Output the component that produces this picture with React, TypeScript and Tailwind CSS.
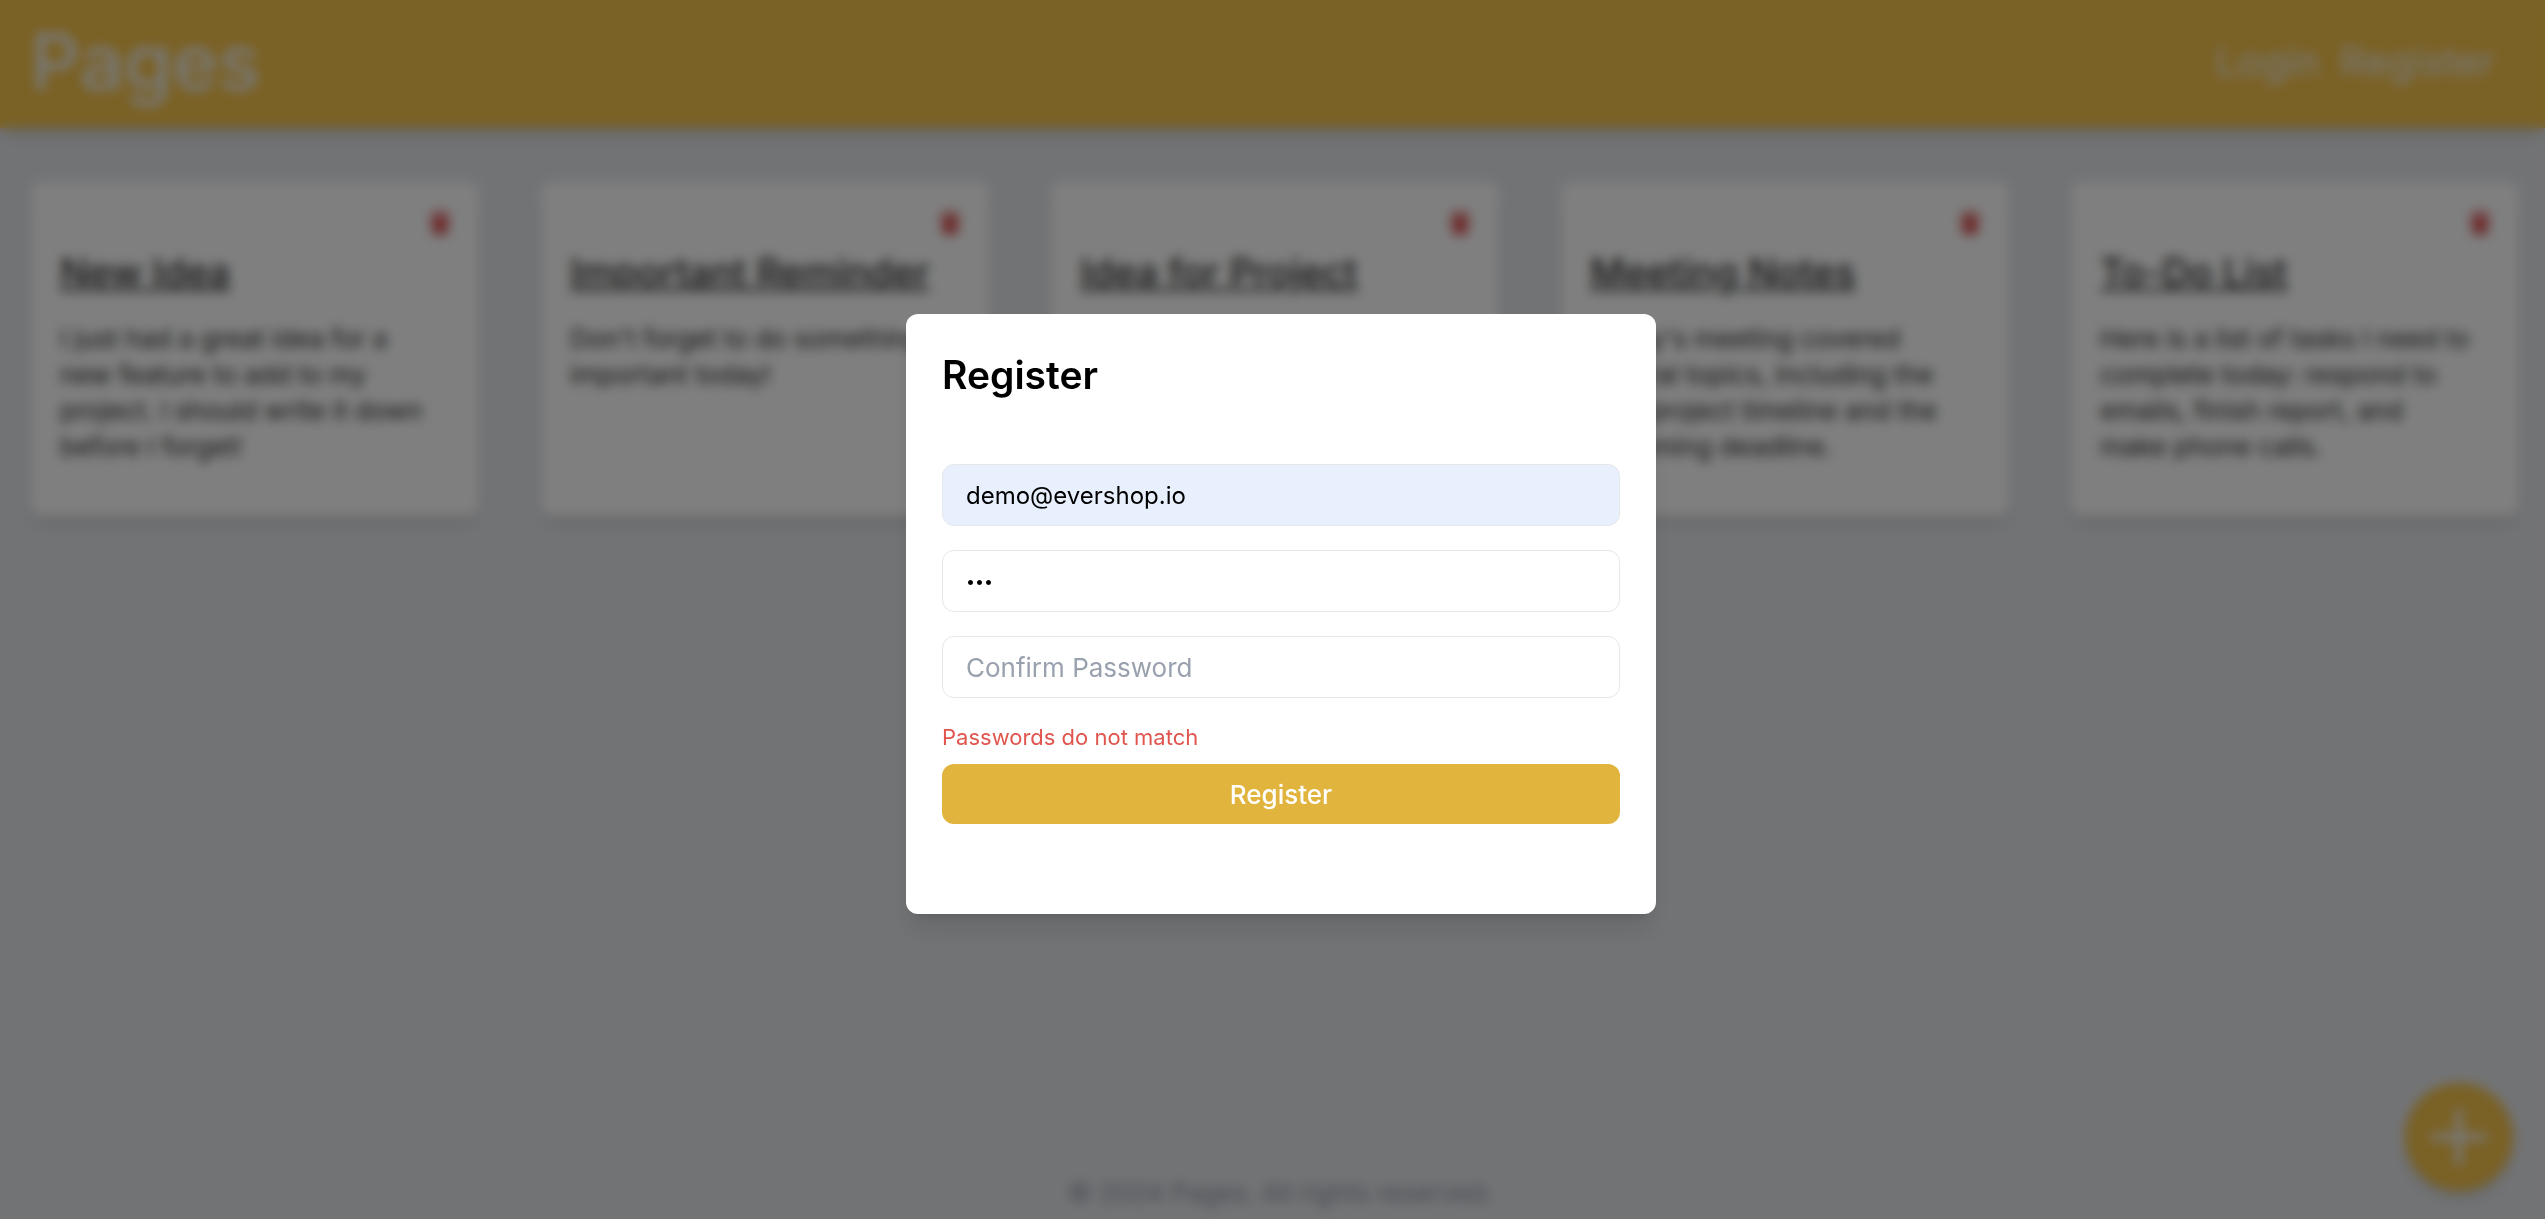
import { useState } from "react";
import { FaTrash } from "react-icons/fa";

type Note = { title: string; body: string };

const notes: Note[] = [
  {
    title: "New Idea",
    body: "I just had a great idea for a\nnew feature to add to my\nproject. I should write it down\nbefore I forget!",
  },
  {
    title: "Important Reminder",
    body: "Don't forget to do something\nimportant today!",
  },
  { title: "Idea for Project", body: "I have an idea for a project." },
  {
    title: "Meeting Notes",
    body: "Today's meeting covered\nseveral topics, including the\nnew project timeline and the\nupcoming deadline.",
  },
  {
    title: "To-Do List",
    body: "Here is a list of tasks I need to\ncomplete today: respond to\nemails, finish report, and\nmake phone calls.",
  },
];

function NoteCard({ title, body }: Note) {
  return (
    <article className="flex min-h-[334px] flex-col rounded-xl bg-white px-[29px] pt-[27px] shadow-lg">
      <button
        type="button"
        aria-label={`Delete ${title}`}
        className="flex h-7 w-5 items-center justify-center self-end text-[26px] text-[#dc5050]"
      >
        <FaTrash />
      </button>
      <h2 className="mt-2 text-[38px] leading-[54px] font-medium whitespace-nowrap text-[#2b2b2b] underline">
        {title}
      </h2>
      <p className="mt-[22px] text-[26px] leading-9 whitespace-pre-line text-[#2b2b2b]">{body}</p>
    </article>
  );
}

const fieldClass =
  "block h-[62px] w-full rounded-xl border border-gray-200 px-[23px] text-black outline-none placeholder:text-gray-400";

function RegisterDialog() {
  const [email, setEmail] = useState("demo@evershop.io");
  const [password, setPassword] = useState("123");
  const [confirm, setConfirm] = useState("");

  return (
    <div className="fixed inset-0 z-20 flex items-center justify-center bg-black/50 pt-[9px] pl-[17px] backdrop-blur-[6px]">
      <section
        role="dialog"
        aria-modal="true"
        aria-labelledby="register-title"
        className="min-h-[600px] w-full max-w-[750px] rounded-xl bg-white px-9 pt-[34px] pb-20 shadow-xl"
      >
        <h2 id="register-title" className="text-[39px] leading-[54px] font-semibold text-black">
          Register
        </h2>
        <form className="mt-[62px]" onSubmit={(event) => event.preventDefault()}>
          <div className="flex flex-col gap-6">
            <input
              type="email"
              aria-label="Email"
              placeholder="Email"
              value={email}
              onChange={(event) => setEmail(event.target.value)}
              className={`${fieldClass} bg-[#e8effd] text-[24px]`}
            />
            <input
              type="password"
              aria-label="Password"
              placeholder="Password"
              value={password}
              onChange={(event) => setPassword(event.target.value)}
              className={`${fieldClass} bg-white text-[16px]`}
            />
            <input
              type="password"
              aria-label="Confirm Password"
              placeholder="Confirm Password"
              value={confirm}
              onChange={(event) => setConfirm(event.target.value)}
              className={`${fieldClass} bg-white text-[26px]`}
            />
          </div>
          <p role="alert" className="mt-6 text-[22px] leading-[30px] text-[#e0554e]">
            Passwords do not match
          </p>
          <button
            type="submit"
            className="mt-3 h-[60px] w-full rounded-xl bg-[#e1b43e] text-[26px] font-medium text-white"
          >
            Register
          </button>
        </form>
      </section>
    </div>
  );
}

export default function App() {
  return (
    <div className="flex min-h-screen flex-col bg-gray-200 font-['Inter','Liberation_Sans',sans-serif]">
      <header className="flex h-32 items-center justify-between bg-[#f4c24a] pr-[50px] pb-1 pl-[30px] shadow-lg">
        <h1 className="text-[78px] leading-none font-medium text-gray-100">Pages</h1>
        <nav className="flex gap-5 text-[40px] text-gray-100">
          <a href="#login">Login</a>
          <a href="#register">Register</a>
        </nav>
      </header>
      <main className="grid flex-1 grid-cols-5 content-start gap-[62px] pt-[54px] pr-[26px] pl-[31px]">
        {notes.map((note) => (
          <NoteCard key={note.title} {...note} />
        ))}
      </main>
      <footer className="pb-2 pl-4 text-center text-[26px] leading-9 text-[#9297a3]">
        © 2024 Pages. All rights reserved.
      </footer>
      <button
        type="button"
        aria-label="Add note"
        className="fixed right-8 bottom-7 z-10 flex size-[108px] items-center justify-center rounded-full bg-[#f4c24a] text-gray-100 shadow-lg"
      >
        <svg viewBox="0 0 60 60" className="size-[60px]" fill="none" stroke="currentColor" strokeWidth="7" strokeLinecap="round">
          <path d="M30 5v50M5 30h50" />
        </svg>
      </button>
      <RegisterDialog />
    </div>
  );
}
